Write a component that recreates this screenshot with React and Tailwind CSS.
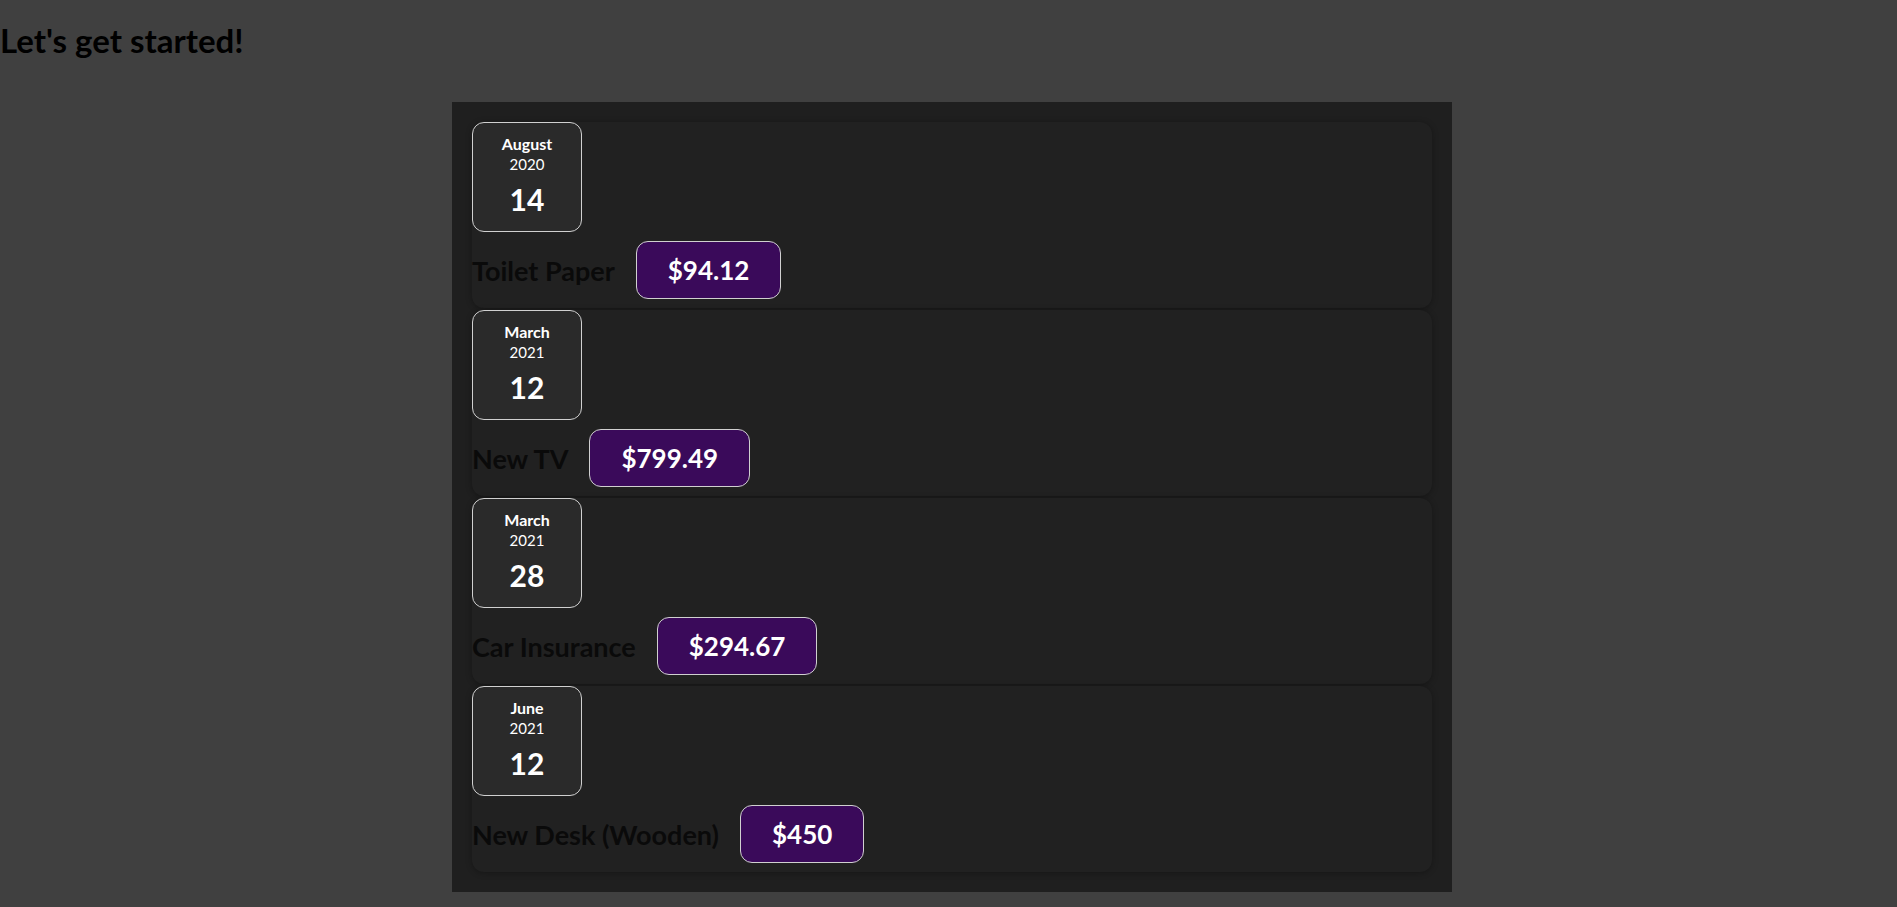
const expenses = [
  { id: 1, title: "Toilet Paper", amount: "$94.12", month: "August", year: "2020", day: "14" },
  { id: 2, title: "New TV", amount: "$799.49", month: "March", year: "2021", day: "12" },
  { id: 3, title: "Car Insurance", amount: "$294.67", month: "March", year: "2021", day: "28" },
  { id: 4, title: "New Desk (Wooden)", amount: "$450", month: "June", year: "2021", day: "12" },
];

function ExpenseDate({ month, year, day }) {
  return (
    <div className="w-[110px] h-[110px] pt-[11px] flex flex-col items-center rounded-xl border border-[#d0d0d0] bg-[#2a2a2a] text-white">
      <div className="text-[16px] font-bold leading-[20px]">{month}</div>
      <div className="text-[15px] leading-[20px]">{year}</div>
      <div className="text-[30px] font-bold leading-[51px]">{day}</div>
    </div>
  );
}

function ExpenseItem({ expense }) {
  return (
    <div className="rounded-xl bg-[#212121] pb-[9px] shadow-[0_1px_6px_rgba(0,0,0,0.3)]">
      <ExpenseDate month={expense.month} year={expense.year} day={expense.day} />
      <div className="mt-[9px] flex items-center gap-[21px]">
        <h2 className="text-[27px] font-bold text-[#0a0a0a] pt-[3px]">{expense.title}</h2>
        <div className="h-[58px] px-[31px] flex items-center rounded-xl border border-[#d0d0d0] bg-[#3a0a5a] text-[26px] font-bold text-white">
          {expense.amount}
        </div>
      </div>
    </div>
  );
}

export default function App() {
  return (
    <div className="min-h-screen bg-[#404040] font-['Lato',sans-serif] pt-[22px] pb-[15px]">
      <h1 className="text-[33px] font-bold text-black leading-[36px]">Let's get started!</h1>
      <div className="ml-[452px] mt-[44px] w-[1000px] bg-[#1f1f1f] p-5 flex flex-col gap-[2px]">
        {expenses.map((e) => (
          <ExpenseItem key={e.id} expense={e} />
        ))}
      </div>
    </div>
  );
}
